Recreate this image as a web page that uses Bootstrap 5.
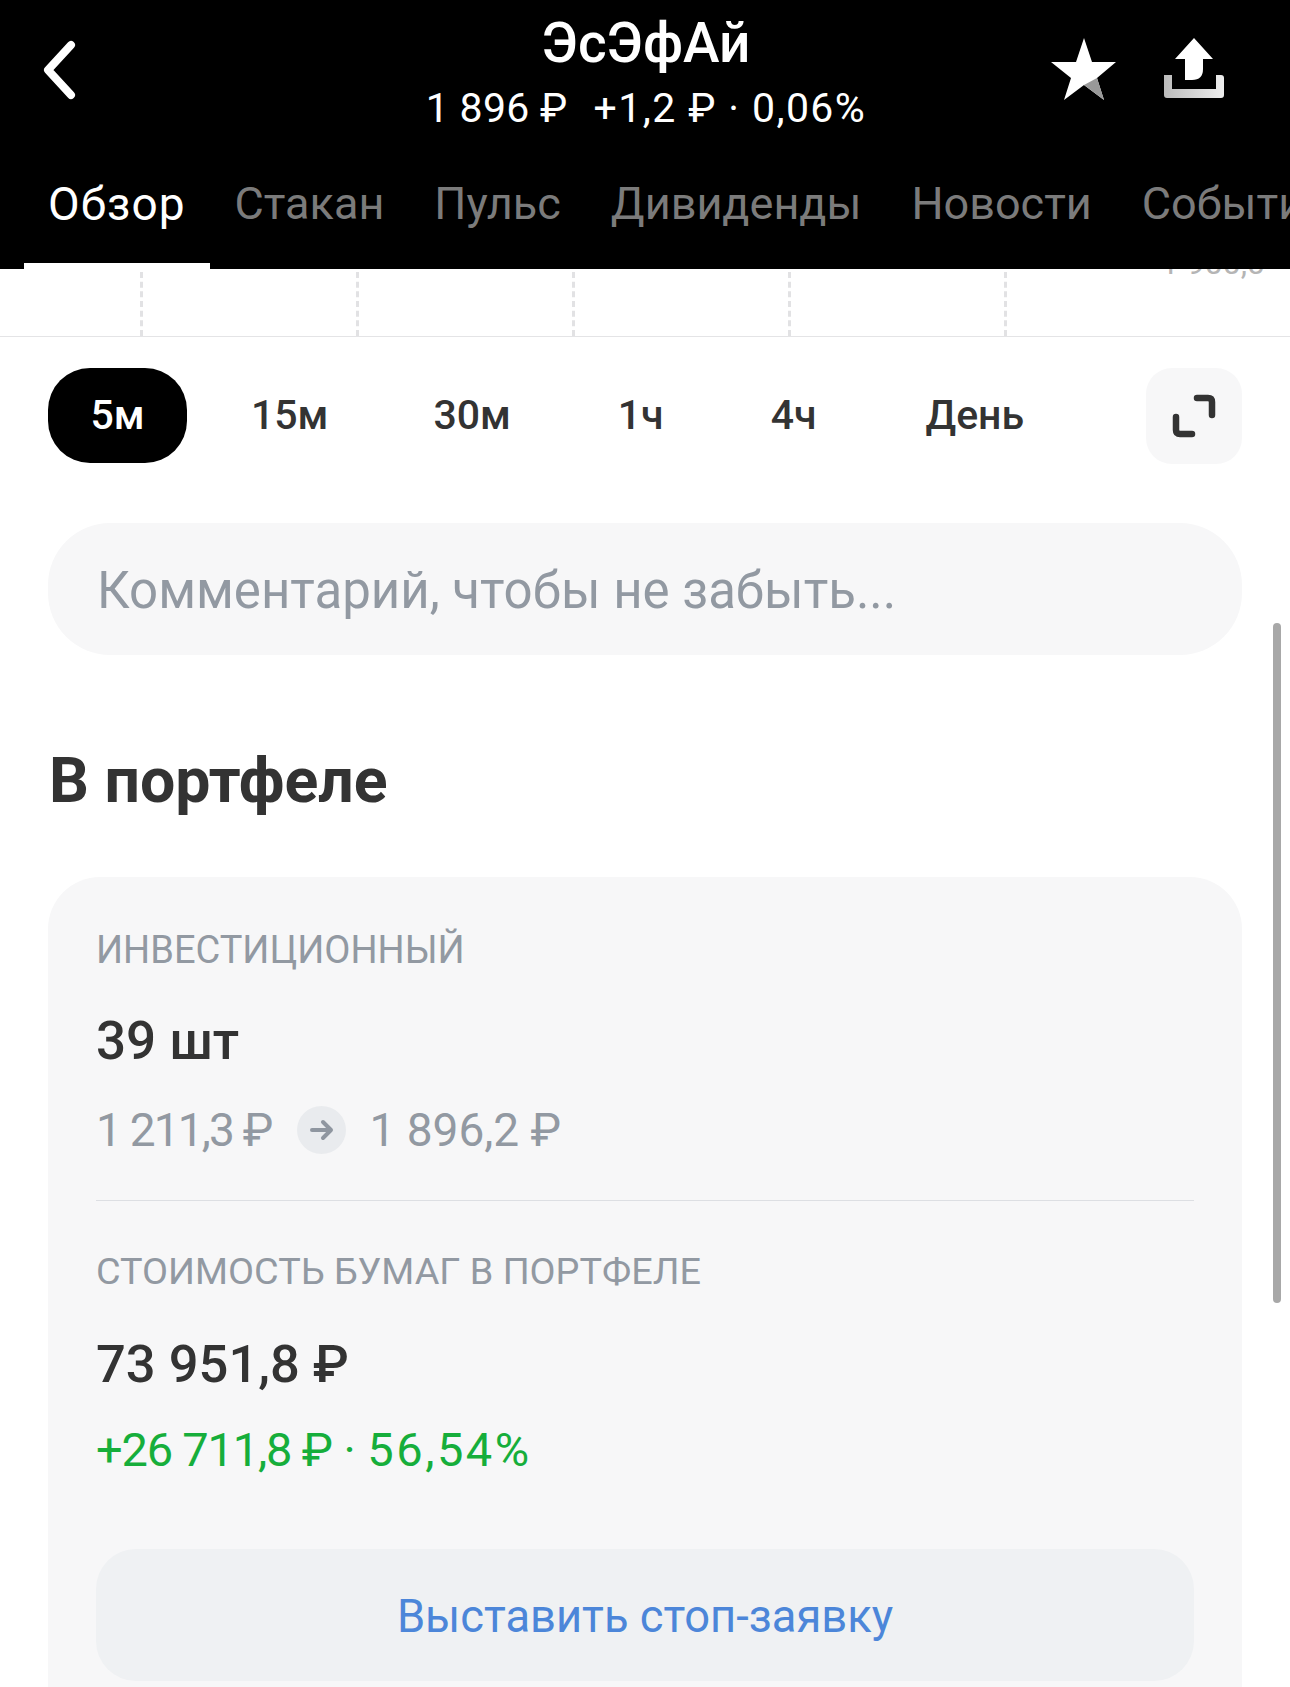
<!DOCTYPE html>
<html lang="ru">
<head>
  <meta charset="UTF-8">
  <title>ЭсЭфАй</title>
  <meta name="viewport" content="width=device-width, initial-scale=1">
  <link href="https://cdn.jsdelivr.net/npm/bootstrap@5.3.3/dist/css/bootstrap.min.css" rel="stylesheet">
  <style>
    html, body { height: 1687px; overflow: hidden; }
    body { font-family: Roboto, "Liberation Sans", sans-serif; color: #333; background: #fff; position: relative; }
    .top-head { background: #000; color: #fff; height: 269px; position: relative; z-index: 2; }
    .head-row { height: 155px; padding: 0 66px 0 40px; }
    .head-side { flex: 1 1 0; }
    .head-mid { margin-left: 28px; }
    .head-title { font-size: 55px; font-weight: 500; line-height: 58px; margin-top: 14px; }
    .head-sub { font-size: 41px; line-height: 46px; margin-top: 13px; letter-spacing: .3px; white-space: nowrap; }
    .head-gap { margin-left: 26px; letter-spacing: 1.4px; }
    .head-icons { gap: 46px; }
    .head-ico { margin-top: 38px; }
    .tab-row { height: 114px; padding-left: 24px; white-space: nowrap; overflow: hidden; }
    .tab-item { font-size: 45px; color: #7b7b7b; padding: 0 25px; height: 114px; line-height: 98px; }
    .tab-item.is-on { color: #fff; border-bottom: 6px solid #fff; font-size: 46px; letter-spacing: 1px; padding: 0 24px 0 24px; }
    .chart-tail { height: 68px; border-bottom: 1px solid #e4e4e6; position: relative; margin-bottom: 2px; }
    .chart-tick { position: absolute; top: 3px; bottom: 0; border-left: 3px dashed #e2e2e4; }
    .chart-lbl { position: absolute; right: 25px; top: -21px; font-size: 32px; line-height: 30px; color: #b5b5b5; }
    .range-row { padding: 29px 48px 0 48px; height: 150px; }
    .range-btn { font-size: 41px; font-weight: 500; color: #333; height: 95px; line-height: 95px; }
    .range-btn.is-on { background: #000; color: #fff; border-radius: 42px; width: 139px; text-align: center; }
    .gap-a { margin-left: 64px; }
    .gap-b { margin-left: 105px; }
    .gap-c { margin-left: 107px; }
    .gap-d { margin-left: 109px; }
    .range-full { width: 96px; height: 96px; background: #f7f7f8; border-radius: 26px; }
    .note-box { margin: 34px 48px 0; height: 132px; background: #f7f7f8; border-radius: 62px; padding-left: 49px; font-size: 51px; color: #9299a2; line-height: 136px; }
    .sect-title { font-size: 62.6px; font-weight: 700; color: #333; margin: 0 0 0 49px; padding-top: 93px; line-height: 66px; }
    .pf-card { margin: 63px 48px 0; background: #f7f7f8; border-radius: 52px; padding: 51px 48px 0; height: 900px; }
    .pf-label { font-size: 38px; color: #9299a2; line-height: 44px; }
    .pf-big { font-size: 53px; font-weight: 500; color: #333; line-height: 60px; margin-top: 39px; }
    .pf-value { font-size: 52.5px; font-weight: 500; color: #333; line-height: 60px; margin-top: 41px; }
    .pf-muted { font-size: 46px; color: #9299a2; line-height: 54px; margin-top: 32px; }
    .pf-first { letter-spacing: -1.8px; }
    .pf-arrow { width: 49px; height: 48px; border-radius: 50%; background: #e9ebee; margin: 0 23px 0 26px; }
    .pf-line { border-top: 1px solid #dddfe3; margin: 43px 0 0; }
    .pf-label-2 { margin-top: 48px; font-size: 37.8px; }
    .pf-green { font-size: 47px; color: #16ae3b; line-height: 54px; margin-top: 29px; }
    .pf-tight { letter-spacing: -1.2px; }
    .pf-wide { letter-spacing: 2.5px; }
    .pf-action { background: #eff1f3; border-radius: 40px; height: 132px; line-height: 136px; text-align: center; font-size: 45.3px; color: #4c86d9; margin-top: 72px; }
    .side-thumb { position: absolute; right: 9px; top: 623px; width: 8px; height: 680px; background: #a8a8a8; border-radius: 4px; }
  </style>
</head>
<body>
  <div class="top-head">
    <div class="head-row d-flex justify-content-between align-items-start">
      <div class="head-side pt-4">
        <svg width="40" height="60" viewBox="0 0 40 60" class="mt-3"><path d="M31 5 L8 30 L31 55" fill="none" stroke="#fff" stroke-width="8" stroke-linecap="round" stroke-linejoin="round"/></svg>
      </div>
      <div class="head-mid text-center">
        <div class="head-title">ЭсЭфАй</div>
        <div class="head-sub">1 896 ₽<span class="head-gap">+1,2 ₽ · 0,06%</span></div>
      </div>
      <div class="head-side head-icons d-flex align-items-start justify-content-end">
        <svg width="68" height="64" viewBox="0 0 68 64" class="head-ico"><path d="M34 0 L42 24 L66 24 L47 40 L54 62 L34 47 L14 62 L21 40 L1 24 L26 24 Z" fill="#fff"/><path d="M47 40 L54 62 L34 47 Z" fill="#999"/></svg>
        <svg width="60" height="62" viewBox="0 0 60 62" class="head-ico"><defs><linearGradient id="trayFade" x1="0" y1="0" x2="1" y2="0"><stop offset="0" stop-color="#bbb"/><stop offset="1" stop-color="#eee"/></linearGradient></defs><path d="M30 0 L49 21 L39 21 L39 31 Q39 42 28 42 L21 42 L21 21 L11 21 Z" fill="#fff"/><path d="M0 37 H8 V51 H52 V37 H57 Q60 37 60 40 V57 Q60 60 57 60 H3 Q0 60 0 57 Z" fill="url(#trayFade)"/></svg>
      </div>
    </div>
    <div class="tab-row d-flex">
      <div class="tab-item is-on">Обзор</div>
      <div class="tab-item">Стакан</div>
      <div class="tab-item">Пульс</div>
      <div class="tab-item">Дивиденды</div>
      <div class="tab-item">Новости</div>
      <div class="tab-item">События</div>
    </div>
  </div>
  <div class="chart-tail">
    <i class="chart-tick" style="left:140px"></i>
    <i class="chart-tick" style="left:356px"></i>
    <i class="chart-tick" style="left:572px"></i>
    <i class="chart-tick" style="left:788px"></i>
    <i class="chart-tick" style="left:1004px"></i>
    <span class="chart-lbl">1 900,0</span>
  </div>
  <div class="range-row d-flex justify-content-between align-items-start">
    <div class="d-flex align-items-start">
      <div class="range-btn is-on">5м</div>
      <div class="range-btn gap-a">15м</div>
      <div class="range-btn gap-b">30м</div>
      <div class="range-btn gap-c">1ч</div>
      <div class="range-btn gap-c">4ч</div>
      <div class="range-btn gap-d">День</div>
    </div>
    <div class="range-full d-flex align-items-center justify-content-center">
      <svg width="44" height="44" viewBox="0 0 44 44"><path d="M25 4 H36 Q40 4 40 8 V21 M4 23 V36 Q4 40 8 40 H20" fill="none" stroke="#333" stroke-width="6.5" stroke-linecap="round"/></svg>
    </div>
  </div>
  <div class="note-box">Комментарий, чтобы не забыть...</div>
  <h2 class="sect-title">В портфеле</h2>
  <div class="pf-card">
    <div class="pf-label">ИНВЕСТИЦИОННЫЙ</div>
    <div class="pf-big">39 шт</div>
    <div class="pf-muted d-flex align-items-center"><span class="pf-first">1 211,3 ₽</span>
      <span class="pf-arrow d-flex align-items-center justify-content-center">
        <svg width="26" height="22" viewBox="0 0 26 22"><path d="M3 11 H22 M14 3 L22 11 L14 19" fill="none" stroke="#8f96a0" stroke-width="4" stroke-linecap="round" stroke-linejoin="round"/></svg>
      </span><span>1 896,2 ₽</span></div>
    <div class="pf-line"></div>
    <div class="pf-label pf-label-2">СТОИМОСТЬ БУМАГ В ПОРТФЕЛЕ</div>
    <div class="pf-value">73 951,8 ₽</div>
    <div class="pf-green"><span class="pf-tight">+26 711,8 ₽</span> · <span class="pf-wide">56,54%</span></div>
    <div class="pf-action">Выставить стоп-заявку</div>
  </div>
  <div class="side-thumb"></div>
  <script src="https://cdn.jsdelivr.net/npm/bootstrap@5.3.3/dist/js/bootstrap.bundle.min.js"></script>
</body>
</html>
